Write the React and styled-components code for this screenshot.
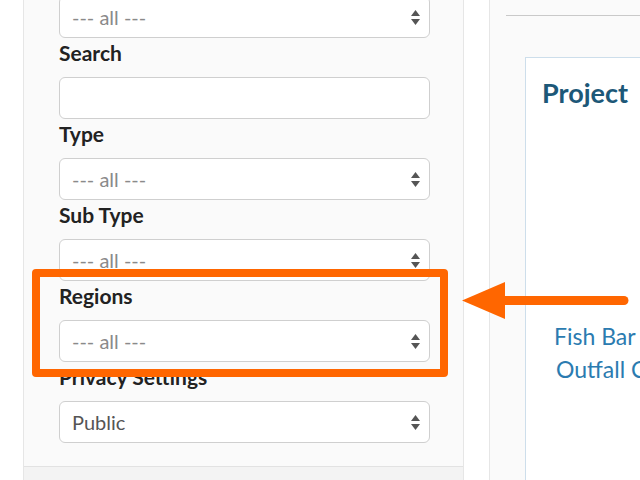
import React from 'react'
import styled, { createGlobalStyle } from 'styled-components'

const GlobalStyle = createGlobalStyle`
html, body {
  margin: 0;
  padding: 0;
  overflow: hidden;
  background: #fff;
}
body {
  font-family: Lato, "Open Sans", sans-serif;
}
`

const fields = [
  { label: null, value: '--- all ---', kind: 'select' },
  { label: 'Search', kind: 'input' },
  { label: 'Type', value: '--- all ---', kind: 'select' },
  { label: 'Sub Type', value: '--- all ---', kind: 'select' },
  { label: 'Regions', value: '--- all ---', kind: 'select' },
  { label: 'Privacy Settings', value: 'Public', kind: 'select', filled: true },
]

const Arrows = () => (
  <svg width="9" height="15" viewBox="0 0 9 15">
    <polygon points="4.5,0 9,6 0,6" fill="#555" />
    <polygon points="0,9 9,9 4.5,15" fill="#555" />
  </svg>
)

const SelectBox = ({ value, filled }) => (
  <Box>
    <BoxText $filled={filled}>{value}</BoxText>
    <ArrowSlot>
      <Arrows />
    </ArrowSlot>
  </Box>
)

export default () => (
  <>
    <GlobalStyle />
    <Page>
      <Sidebar>
        <Form>
          {fields.map((f, i) => (
            <Field key={i}>
              {f.label && <Label>{f.label}</Label>}
              {f.kind === 'select' ? (
                <SelectBox value={f.value} filled={f.filled} />
              ) : (
                <Box />
              )}
            </Field>
          ))}
        </Form>
        <SidebarFooter />
      </Sidebar>

      <Main>
        <Rule />
        <Card>
          <CardTitle>Project</CardTitle>
          <ProjectLinks>
            <ProjectLink>Fish Bar Creek</ProjectLink>
            <ProjectLink $indent>Outfall Channel</ProjectLink>
          </ProjectLinks>
        </Card>
      </Main>

      <Highlight />
      <Pointer width="180" height="50" viewBox="0 0 180 50">
        <line x1="40" y1="25.5" x2="169" y2="25.5" stroke="#ff6600" strokeWidth="9" strokeLinecap="round" />
        <polygon points="7,25.5 50,7 50,44" fill="#ff6600" />
      </Pointer>
    </Page>
  </>
)

const Page = styled.div`
position: relative;
display: flex;
min-height: 480px;
padding-left: 23px;
`

const Sidebar = styled.aside`
width: 441px;
flex: none;
box-sizing: border-box;
border-left: 1px solid #e6e6e6;
border-right: 1px solid #e6e6e6;
display: flex;
flex-direction: column;
`

const Form = styled.div`
background: #fafafa;
padding: 0 33px 23px 35px;
margin-top: -4px;
border-bottom: 1px solid #e2e2e2;
`

const Field = styled.div`
display: flex;
flex-direction: column;
`

const Label = styled.label`
display: block;
margin: 3px 0 12px;
font-size: 21px;
line-height: 24px;
font-weight: 700;
color: #222;
`

const Box = styled.div`
position: relative;
height: 42px;
box-sizing: border-box;
border: 1px solid #cfcfcf;
border-radius: 6px;
background: #fff;
display: flex;
align-items: center;
padding-left: 12px;
`

const BoxText = styled.span`
font-size: 20px;
color: ${p => (p.$filled ? '#555' : '#8a8a8a')};
`

const ArrowSlot = styled.span`
position: absolute;
right: 9px;
top: 13px;
display: flex;
`

const SidebarFooter = styled.div`
flex: 1;
background: #f3f3f3;
`

const Main = styled.main`
flex: 1;
margin-left: 25px;
border-left: 1px solid #e6e6e6;
background: #fafafa;
padding: 15px 0 0 16px;
`

const Rule = styled.div`
height: 1px;
background: #c9c9c9;
`

const Card = styled.section`
margin: 41px 0 0 19px;
width: 320px;
height: 480px;
background: #fff;
border: 1px solid #cddeeb;
border-right: none;
`

const CardTitle = styled.h2`
margin: 0;
padding: 19px 0 0 16px;
font-size: 27px;
line-height: 32px;
font-weight: 700;
color: #1d5878;
`

const ProjectLinks = styled.div`
margin-top: 211px;
padding-left: 28px;
`

const ProjectLink = styled.div`
font-size: 23px;
line-height: 33px;
color: #2b7bb0;
white-space: nowrap;
padding-left: ${p => (p.$indent ? '2px' : '0')};
`

const Highlight = styled.div`
position: absolute;
left: 32px;
top: 269px;
width: 416px;
height: 108px;
box-sizing: border-box;
border: 8px solid #ff6600;
border-radius: 4px;
pointer-events: none;
`

const Pointer = styled.svg`
position: absolute;
left: 455px;
top: 275px;
`
